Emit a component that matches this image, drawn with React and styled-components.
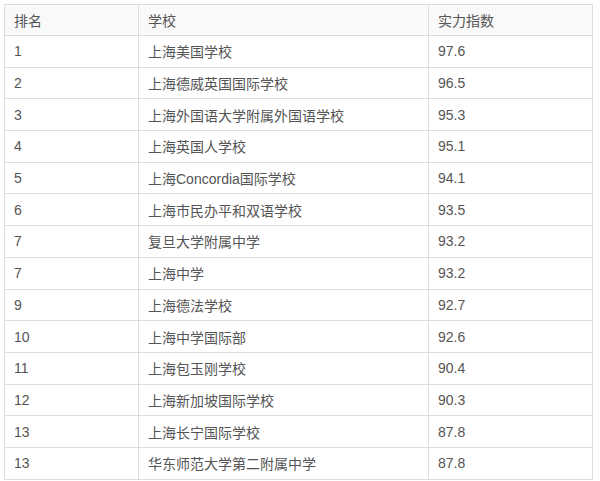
import React from "react"
import styled, { createGlobalStyle } from "styled-components"

const GlobalStyle = createGlobalStyle`
  html, body {
    margin: 0;
    padding: 0;
    background: #fff;
  }
  body {
    font-family: "Liberation Sans", "Noto Sans CJK SC", sans-serif;
    overflow: hidden;
  }
`

const Wrapper = styled.div`
  padding: 4px 0 0 4px;
`

const Table = styled.table`
  border-collapse: collapse;
  table-layout: fixed;
  width: 588px;
  font-size: 14px;
  color: #555;
`

const Col = styled.col`
  width: ${({ w }) => w}px;
`

const HeadCell = styled.th`
  height: 31px;
  padding: 0 9px;
  text-align: left;
  font-weight: normal;
  background: #f9f9f9;
  border: 1px solid #ddd;
  box-sizing: border-box;
`

const Cell = styled.td`
  height: 31.7px;
  padding: 0 9px;
  border: 1px solid #ddd;
  box-sizing: border-box;
  white-space: nowrap;
`

const rows = [
  ["1", "上海美国学校", "97.6"],
  ["2", "上海德威英国国际学校", "96.5"],
  ["3", "上海外国语大学附属外国语学校", "95.3"],
  ["4", "上海英国人学校", "95.1"],
  ["5", "上海Concordia国际学校", "94.1"],
  ["6", "上海市民办平和双语学校", "93.5"],
  ["7", "复旦大学附属中学", "93.2"],
  ["7", "上海中学", "93.2"],
  ["9", "上海德法学校", "92.7"],
  ["10", "上海中学国际部", "92.6"],
  ["11", "上海包玉刚学校", "90.4"],
  ["12", "上海新加坡国际学校", "90.3"],
  ["13", "上海长宁国际学校", "87.8"],
  ["13", "华东师范大学第二附属中学", "87.8"],
]

const App = () => (
  <Wrapper>
    <GlobalStyle />
    <Table>
      <colgroup>
        <Col w={134} />
        <Col w={290} />
        <Col w={164} />
      </colgroup>
      <thead>
        <tr>
          <HeadCell>排名</HeadCell>
          <HeadCell>学校</HeadCell>
          <HeadCell>实力指数</HeadCell>
        </tr>
      </thead>
      <tbody>
        {rows.map(([rank, school, score], i) => (
          <tr key={i}>
            <Cell>{rank}</Cell>
            <Cell>{school}</Cell>
            <Cell>{score}</Cell>
          </tr>
        ))}
      </tbody>
    </Table>
  </Wrapper>
)

export default App
